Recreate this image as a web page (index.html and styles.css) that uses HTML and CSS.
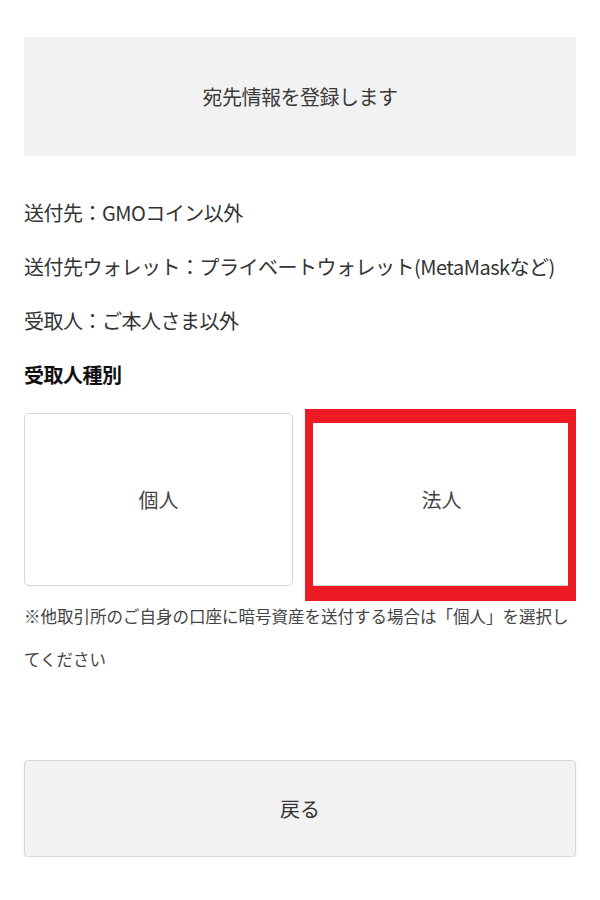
FILE: index.html
```html
<!DOCTYPE html>
<html lang="ja">
<head>
<meta charset="utf-8">
<title>宛先情報を登録します</title>
<link rel="stylesheet" href="styles.css">
</head>
<body>
<main class="page">
  <div class="banner">宛先情報を登録します</div>

  <ul class="info">
    <li>送付先：GMOコイン以外</li>
    <li>送付先ウォレット：プライベートウォレット(MetaMaskなど)</li>
    <li>受取人：ご本人さま以外</li>
    <li class="info-head">受取人種別</li>
  </ul>

  <div class="choices">
    <div class="choice" role="button">個人</div>
    <div class="choice" role="button">法人<span class="mark"></span></div>
  </div>

  <p class="note">※他取引所のご自身の口座に暗号資産を送付する場合は「個人」を選択してください</p>

  <div class="back" role="button">戻る</div>
</main>
</body>
</html>
```

FILE: styles.css
```css
* { box-sizing: border-box; }

html, body {
  margin: 0;
  padding: 0;
  background: #ffffff;
}

body {
  font-family: "Noto Sans CJK JP", "Noto Sans", "Liberation Sans", sans-serif;
  color: #333333;
}

.page {
  width: 600px;
  padding: 37px 24px 0 24px;
}

.banner {
  height: 119px;
  background: #f2f2f2;
  display: flex;
  align-items: center;
  justify-content: center;
  font-size: 20px;
  letter-spacing: -0.5px;
  color: #3a3a3a;
}

.info {
  list-style: none;
  margin: 30px 0 0 0;
  padding: 0;
  font-size: 20px;
  line-height: 54px;
  letter-spacing: -0.5px;
  white-space: nowrap;
}

.info-head {
  font-weight: 700;
  color: #111111;
}

.choices {
  margin-top: 11px;
  display: grid;
  grid-template-columns: 1fr 1fr;
  column-gap: 14px;
}

.choice {
  position: relative;
  height: 173px;
  display: flex;
  align-items: center;
  justify-content: center;
  background: #ffffff;
  border: 1px solid #d6d6d6;
  border-radius: 5px;
  font-size: 20px;
  color: #444444;
  cursor: pointer;
}

.mark {
  position: absolute;
  top: -5px;
  left: -3px;
  right: -1px;
  bottom: -16px;
  border-style: solid;
  border-color: #ec1b24;
  border-width: 14px 8px 15px 8px;
  pointer-events: none;
}

.note {
  margin: 9px 0 0 0;
  font-size: 16.5px;
  line-height: 43px;
  color: #444444;
}

.back {
  display: flex;
  align-items: center;
  justify-content: center;
  height: 97px;
  margin-top: 79px;
  background: #f2f2f2;
  border: 1px solid #d8d8d8;
  border-radius: 4px;
  box-shadow: 0 1px 2px rgba(0, 0, 0, 0.12);
  font-size: 20px;
  color: #333333;
  cursor: pointer;
}
```
